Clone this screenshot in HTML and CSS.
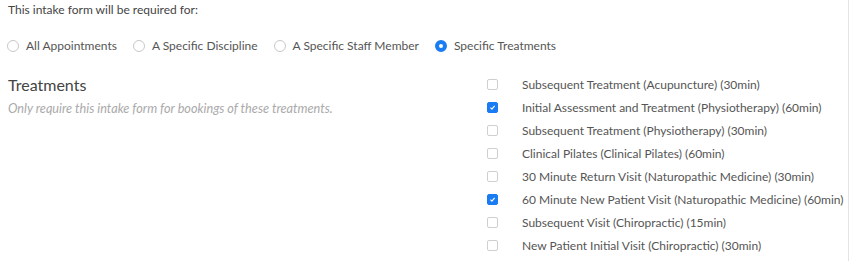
FILE: index.html
```html
<!DOCTYPE html>
<html lang="en">
<head>
    <meta charset="UTF-8">
    <meta name="viewport" content="width=device-width, initial-scale=1.0">
    <title>Intake Form Settings</title>
    <link rel="stylesheet" href="styles.css">
</head>
<body>

<div id="form-settings">
    <p class="intro">This intake form will be required for:</p>

    <div class="radio-row">
        <label class="radio"><span class="radio-dot"></span>All Appointments</label>
        <label class="radio"><span class="radio-dot"></span>A Specific Discipline</label>
        <label class="radio"><span class="radio-dot"></span>A Specific Staff Member</label>
        <label class="radio checked"><span class="radio-dot"></span>Specific Treatments</label>
    </div>

    <div class="section">
        <div class="section-info">
            <h3>Treatments</h3>
            <p class="hint">Only require this intake form for bookings of these treatments.</p>
        </div>
        <ul class="treatments">
            <li><span class="box"></span>Subsequent Treatment (Acupuncture) (30min)</li>
            <li><span class="box checked"><svg viewBox="0 0 11 11"><path d="M3 5.6 L4.8 7.4 L8.1 3.6" /></svg></span>Initial Assessment and Treatment (Physiotherapy) (60min)</li>
            <li><span class="box"></span>Subsequent Treatment (Physiotherapy) (30min)</li>
            <li><span class="box"></span>Clinical Pilates (Clinical Pilates) (60min)</li>
            <li><span class="box"></span>30 Minute Return Visit (Naturopathic Medicine) (30min)</li>
            <li><span class="box checked"><svg viewBox="0 0 11 11"><path d="M3 5.6 L4.8 7.4 L8.1 3.6" /></svg></span>60 Minute New Patient Visit (Naturopathic Medicine) (60min)</li>
            <li><span class="box"></span>Subsequent Visit (Chiropractic) (15min)</li>
            <li><span class="box"></span>New Patient Initial Visit (Chiropractic) (30min)</li>
        </ul>
    </div>
</div>

</body>
</html>
```

FILE: styles.css
```css
body {
    font-family: Lato, "Liberation Sans", sans-serif;
    margin: 0;
    background-color: white;
    color: #555;
}
#form-settings {
    width: 849px;
    height: 261px;
    box-sizing: border-box;
    border-right: 1px solid #e3e3e3;
    padding: 2px 0 0 8px;
    overflow: hidden;
}
.intro {
    margin: 0;
    font-size: 12px;
    line-height: 15px;
    color: #444;
}
.radio-row {
    display: flex;
    gap: 16px;
    margin-top: 21px;
    margin-left: -1px;
}
.radio {
    display: flex;
    align-items: center;
    font-size: 12px;
    line-height: 15px;
    color: #555;
}
.radio-dot {
    width: 10px;
    height: 10px;
    border: 1px solid #c8c8c8;
    border-radius: 50%;
    margin-right: 7px;
    box-sizing: content-box;
}
.radio.checked .radio-dot {
    width: 4px;
    height: 4px;
    border: 4px solid #1a7cf2;
    background-color: white;
}
.section {
    display: flex;
    margin-top: 22px;
}
.section-info {
    flex: none;
    width: 479px;
}
.section-info h3 {
    margin: 0;
    font-size: 16px;
    font-weight: normal;
    line-height: 20px;
    color: #444;
}
.hint {
    margin: 5px 0 0 0;
    font-size: 12.7px;
    font-style: italic;
    color: #aaa;
}
.treatments {
    list-style: none;
    margin: -2px 0 0 0;
    padding: 0;
}
.treatments li {
    display: flex;
    align-items: center;
    height: 23px;
    font-size: 12px;
    white-space: nowrap;
    color: #555;
}
.box {
    width: 9px;
    height: 9px;
    border: 1px solid #cfcfcf;
    border-radius: 2px;
    margin-right: 24px;
    box-sizing: content-box;
    display: flex;
}
.box.checked {
    border-color: #1a7cf2;
    background-color: #1a7cf2;
}
.box svg {
    width: 9px;
    height: 9px;
    fill: none;
    stroke: white;
    stroke-width: 1.4;
}
```
